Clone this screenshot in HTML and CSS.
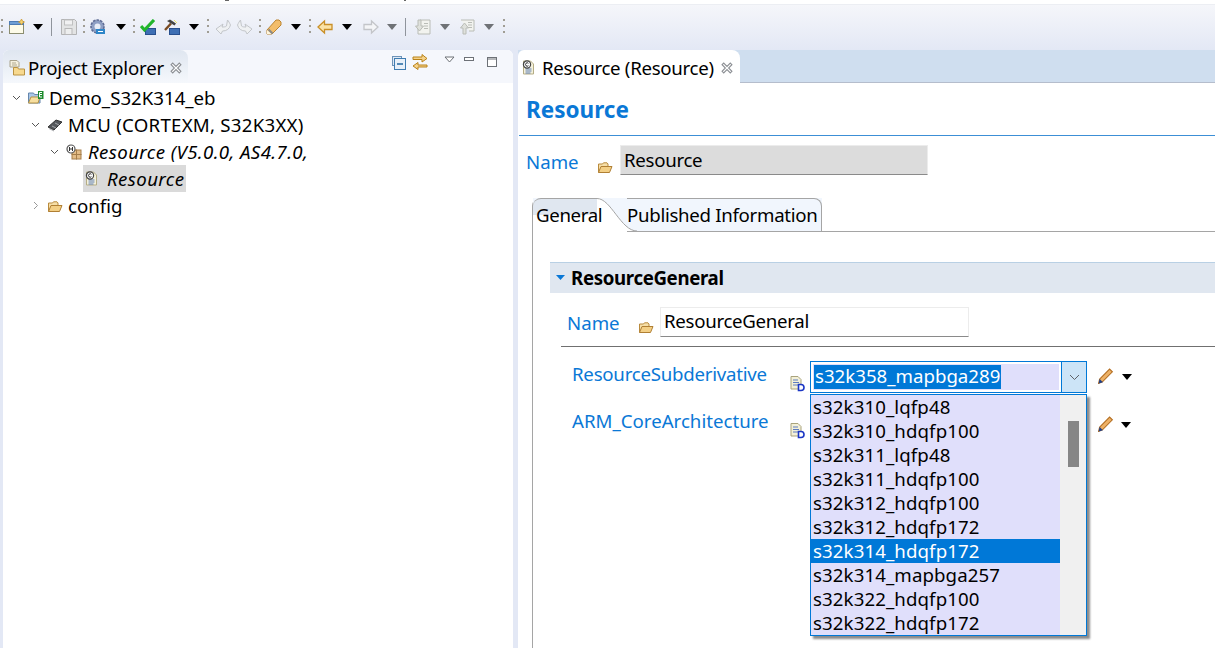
FILE: index.html
```html
<!DOCTYPE html>
<html lang="en">
<head>
<meta charset="utf-8">
<title>Resource</title>
<link rel="stylesheet" href="styles.css">
</head>
<body>
<svg class="defs" width="0" height="0" aria-hidden="true">
  <symbol id="i-folder" viewBox="0 0 16 16">
    <path d="M1.5 13.5V5h4l1-1.2h3.5L11 5v2.5" fill="#f6dfa8" stroke="#b98a3c"/>
    <path d="M1.5 13.5 4 7.5h11l-2.5 6z" fill="#f3cf85" stroke="#b07f33"/>
  </symbol>
  <symbol id="i-doc" viewBox="0 0 16 16">
    <path d="M1.5 1h7l3 3v10h-10z" fill="#f4f1dc" stroke="#b5ad85"/>
    <path d="M3.5 9h6M3.5 11h6M3.5 13h5" stroke="#5f7fb5"/>
    <circle cx="5" cy="4.5" r="3.6" fill="#fff" stroke="#444" stroke-width="1.2"/>
    <path d="M6.4 3.3A1.7 1.7 0 1 0 6.4 5.7" fill="none" stroke="#222"/>
  </symbol>
  <symbol id="i-data" viewBox="0 0 16 16">
    <path d="M1 .5h7l3 3V13H1z" fill="#f3f0d8" stroke="#a9a37c"/>
    <path d="M3 4h5M3 6.500h6M3 9h5" stroke="#5e7cc0"/>
    <path d="M8.500 8.500h2.500a3 3 0 0 1 0 6H8.500z" fill="#fff" stroke="#1b36c4" stroke-width="1.600"/>
  </symbol>
  <symbol id="i-pencil" viewBox="1 1 14.500 14.500">
    <path d="M2.500 11 11.500 2l2.500 2.500-9 9-3.500 1.500z" fill="#eeb267" stroke="#b46f22"/>
    <path d="M1.500 15l1-4 3 3z" fill="#1f3f88"/>
  </symbol>
</svg>

<div class="title-strip"><i class="desc desc-y"></i><i class="desc desc-p"></i></div>

<div class="toolbar">
  <i class="grip"></i>
  <svg class="ti m6" viewBox="0 0 16 16"><rect x=".5" y="2.500" width="14" height="12" fill="#fdfbe9" stroke="#8b8d70"/><rect x=".5" y="2.500" width="14" height="3" fill="#6f9fd5" stroke="#4e7cb3"/><path d="M12.500 0l1 2 2 1-2 1-1 2-1-2-2-1 2-1z" fill="#f8d36c" stroke="#c7932a" stroke-width=".7"/></svg>
  <i class="caret m8"></i>
  <i class="sep m8"></i>
  <svg class="ti m9 off" viewBox="0 0 16 16"><path d="M.5.500h13l2 2v13H.500z" fill="#e3e3e3" stroke="#adadad"/><rect x="3.500" y="1" width="8" height="5" fill="#f2f2f2" stroke="#bbb"/><rect x="4" y="9.500" width="7" height="6" fill="#eee" stroke="#b3b3b3"/></svg>
  <i class="grip m6"></i>
  <svg class="ti m5" viewBox="0 0 16 16"><circle cx="7.500" cy="7.500" r="6.500" fill="#8e9fc4" stroke="#5f6d96" stroke-width="1.600" stroke-dasharray="2.600 1"/><circle cx="7.500" cy="7.500" r="3" fill="#e8edf7"/><path d="M6 10h9v5H6z" fill="#2f86c8"/><path d="M8 12.500h5" stroke="#fff"/></svg>
  <i class="caret m10"></i>
  <i class="grip m7"></i>
  <svg class="ti m5" viewBox="0 0 16 16"><rect x="5.500" y="9.500" width="10" height="6" fill="#3e6fb4" stroke="#284f8e"/><path d="M1 7l3.500 4L14 1" fill="none" stroke="#22b52c" stroke-width="3.200"/></svg>
  <svg class="ti m8" viewBox="0 0 16 16"><rect x="5.500" y="9.500" width="10" height="6" fill="#3e6fb4" stroke="#284f8e"/><path d="M1 11 7 4.500" stroke="#7a4b22" stroke-width="2.400"/><path d="M3 2 6 .5l6 4-1.500 2z" fill="#444"/><path d="M10 1l3 3" stroke="#ece36a"/></svg>
  <i class="caret m9"></i>
  <i class="grip m8"></i>
  <svg class="ti m6" viewBox="0 0 16 16"><path d="M1 10l5 5 1.500-3c4 0 7-2 8-6-1-2-2-4-3-5l-1 6c-1 1-3 1-4.500 1L8 5z" fill="#eff1f3" stroke="#c3c6ca"/></svg>
  <svg class="ti m6" viewBox="0 0 16 16"><path d="M15 10l-5 5-1.500-3c-4 0-7-2-8-6 1-2 2-4 3-5l1 6c1 1 3 1 4.500 1L8 5z" fill="#eff1f3" stroke="#c3c6ca"/></svg>
  <i class="grip m6"></i>
  <svg class="ti m5" viewBox="0 0 16 16"><path d="M1 15V11L10 1h3l2 2v3L6 15z" fill="#f3bd6a" stroke="#bb8533"/><path d="M1 15v-4l5 4z" fill="#fff6dc"/><path d="M3 9.500 7.500 14 5.500 15 2 11.500z" fill="#8a8a88"/></svg>
  <i class="caret m9"></i>
  <i class="grip m8"></i>
  <svg class="ti m6" viewBox="0 0 16 16"><path d="M1 8l6.500-6v3.500H15v5H7.500V14z" fill="#fbe3a6" stroke="#c98f27" stroke-width="1.300"/></svg>
  <i class="caret m9"></i>
  <svg class="ti m11" viewBox="0 0 16 16"><path d="M15 8 8.500 2v3.500H1v5h7.500V14z" fill="#f4f5f7" stroke="#c3c5c9" stroke-width="1.300"/></svg>
  <i class="caret caret-off m8"></i>
  <i class="sep m8"></i>
  <svg class="ti m9" viewBox="0 0 16 16"><path d="M5 1h10v14H3V9" fill="#f2f3ef" stroke="#b9bcb6"/><path d="M9 4.500h4M9 7h4M9 9.500h4" stroke="#b9bcb6"/><path d="M3 1h3v6h2.500L4.500 12 .5 7H3z" fill="#dfe1dc" stroke="#b9bcb6"/></svg>
  <i class="caret caret-off m9"></i>
  <svg class="ti m10" viewBox="0 0 16 16"><path d="M1 1h13v11H9" fill="#f2f3ef" stroke="#b9bcb6"/><path d="M8 3.500h4M8 6h4M8 8.500h4" stroke="#b9bcb6"/><path d="M3 15h3V9h2.500L4.500 4 .5 9H3z" fill="#dfe1dc" stroke="#b9bcb6"/></svg>
  <i class="caret caret-off m8"></i>
  <i class="grip m9"></i>
</div>

<main class="workbench">
  <section class="explorer">
    <header class="view-bar">
      <div class="view-tab">
        <svg class="ti" viewBox="0 0 16 16"><path d="M1 .5h7l2 2V7H1z" fill="#f5f1df" stroke="#a9a28c"/><path d="M3 3h4M3 5h5" stroke="#b1a98f"/><path d="M4.500 15V7.500h4l1 1.500h6v6z" fill="#f7d98f" stroke="#ba9342"/></svg>
        <span class="view-title">Project Explorer</span>
        <svg class="close" viewBox="0 0 11 11"><path d="M1 2.500 2.500 1 5.500 4 8.500 1 10 2.500 7 5.500 10 8.500 8.500 10 5.500 7 2.500 10 1 8.500 4 5.500z" fill="#fff" stroke="#8c8f94"/></svg>
      </div>
      <div class="view-tools">
        <svg class="ti tool-a" viewBox="0 0 14 14"><rect x=".5" y=".5" width="9" height="9" fill="#dfe9f5" stroke="#6d93b8"/><rect x="2.500" y="2.500" width="11" height="11" fill="#e8f0f9" stroke="#3f7cb1"/><path d="M5 8h6" stroke="#22679f" stroke-width="1.500"/></svg>
        <svg class="ti tool-b" viewBox="0 0 16 16"><path d="M1 4h9V1.500L15 5.500l-5 3.500V6.500H1z" transform="translate(0 -1)" fill="#f5d28a" stroke="#b98218"/><path d="M15 11H6V8.500L1 12l5 3.500V13h9z" fill="#f5d28a" stroke="#b98218"/></svg>
        <svg class="vt tool-c" viewBox="0 0 11 7"><path d="M1 1h9L5.500 6z" fill="#fff" stroke="#6d7177"/></svg>
        <svg class="vt tool-d" viewBox="0 0 11 7"><rect x=".5" y="1.500" width="9" height="3" fill="#fff" stroke="#6d7177"/></svg>
        <svg class="vt-m tool-e" viewBox="0 0 10 10"><rect x=".5" y=".5" width="9" height="9" fill="#fff" stroke="#6d7177"/><path d="M.5 2h9" stroke="#6d7177"/></svg>
      </div>
    </header>
    <ul class="tree">
      <li class="row lvl0"><span class="chev"><svg viewBox="0 0 9 9"><path d="M1 3l3.500 3.500L8 3" fill="none" stroke="#555"/></svg></span>
        <svg class="ti" viewBox="0 0 16 16"><path d="M.5 13V3h5l1 1.500H12V13z" fill="#a9c6e6" stroke="#6486ad"/><path d="M.5 13 3 7h9l-2 6z" fill="#f7dfa0" stroke="#b59347"/><rect x="10" y="1" width="5.500" height="8" fill="#1d8a2c"/><path d="M14 2.500h-2.500v2H14M11.500 4.500v2.500H14" fill="none" stroke="#fff"/></svg>
        <span class="label lab0">Demo_S32K314_eb</span></li>
      <li class="row lvl1"><span class="chev"><svg viewBox="0 0 9 9"><path d="M1 3l3.500 3.500L8 3" fill="none" stroke="#555"/></svg></span>
        <svg class="ti" viewBox="0 0 16 16"><path d="M1 10 9 3l6 2-8 8z" fill="#55585c" stroke="#333"/><path d="M2 11.500 7 14M5 9l4 2M8 6l4 2" stroke="#a7a9ac"/></svg>
        <span class="label lab-mcu">MCU (CORTEXM, S32K3XX)</span></li>
      <li class="row lvl2"><span class="chev"><svg viewBox="0 0 9 9"><path d="M1 3l3.500 3.500L8 3" fill="none" stroke="#555"/></svg></span>
        <svg class="ti" viewBox="0 0 16 16"><rect x="6" y="6" width="4.500" height="4.500" fill="#e3bd88" stroke="#a67e4a"/><rect x="10.500" y="6" width="4.500" height="4.500" fill="#e3bd88" stroke="#a67e4a"/><rect x="6" y="10.500" width="4.500" height="4.500" fill="#e3bd88" stroke="#a67e4a"/><rect x="10.500" y="10.500" width="4.500" height="4.500" fill="#e3bd88" stroke="#a67e4a"/><circle cx="5" cy="5" r="4" fill="#fff" stroke="#555" stroke-width="1.200"/><path d="M3.500 3v4M6.500 3v4M3.500 5h3" stroke="#333"/></svg>
        <span class="label lab-i">Resource (V5.0.0, AS4.7.0,</span></li>
      <li class="row lvl3"><span class="sel"><svg class="ti"><use href="#i-doc"/></svg><span class="label lab-i">Resource</span></span></li>
      <li class="row lvl1"><span class="chev"><svg viewBox="0 0 9 9"><path d="M3 1l3.500 3.500L3 8" fill="none" stroke="#999"/></svg></span>
        <svg class="ti"><use href="#i-folder"/></svg>
        <span class="label">config</span></li>
    </ul>
  </section>

  <section class="editor">
    <header class="ed-bar">
      <div class="ed-tab">
        <svg class="ti" viewBox="0 0 16 16"><use href="#i-doc"/></svg>
        <span class="ed-title">Resource (Resource)</span>
        <svg class="close" viewBox="0 0 11 11"><path d="M1 2.500 2.500 1 5.500 4 8.500 1 10 2.500 7 5.500 10 8.500 8.500 10 5.500 7 2.500 10 1 8.500 4 5.500z" fill="#fff" stroke="#8c8f94"/></svg>
      </div>
    </header>
    <div class="ed-body">
      <h1 class="form-title">Resource</h1>
      <div class="name-row">
        <span class="link">Name</span>
        <svg class="ti folder"><use href="#i-folder"/></svg>
        <span class="ro-field">Resource</span>
      </div>
      <div class="tabs">
        <div class="tab-strip">
          <span class="tab-on"><span class="tab-on-text">General</span></span>
          <svg class="tab-curve" viewBox="0 0 40 34" preserveAspectRatio="none"><path d="M0 0c14 0 24 33 40 33v1H0z" fill="#fff"/><path d="M0 .5C14 .5 24 33 40 33" fill="none" stroke="#a5a5a5"/></svg>
          <span class="tab-off">Published Information</span>
        </div>
        <div class="tab-body">
          <div class="sec-head"><svg class="tri" viewBox="0 0 9 5"><path d="M0 0h9L4.500 5z" fill="#0a78d6"/></svg><span class="sec-title">ResourceGeneral</span></div>
          <div class="sec-name">
            <span class="link">Name</span>
            <svg class="ti folder2"><use href="#i-folder"/></svg>
            <span class="rw-field">ResourceGeneral</span>
          </div>
          <div class="sec-rule"></div>
          <div class="param p1">
            <span class="link plabel">ResourceSubderivative</span>
            <svg class="ti pico"><use href="#i-data"/></svg>
            <div class="combo">
              <span class="combo-text"><span class="combo-sel">s32k358_mapbga289</span></span>
              <span class="combo-btn"><svg viewBox="0 0 11 7"><path d="M1 1l4.500 4.500L10 1" fill="none" stroke="#5f6368"/></svg></span>
            </div>
            <svg class="ti pen"><use href="#i-pencil"/></svg>
            <i class="caret pcaret"></i>
          </div>
          <div class="param p2">
            <span class="link plabel plabel2">ARM_CoreArchitecture</span>
            <svg class="ti pico"><use href="#i-data"/></svg>
            <svg class="ti pen pen2"><use href="#i-pencil"/></svg>
            <i class="caret pcaret"></i>
          </div>
        </div>
      </div>
    </div>
  </section>
</main>

<div class="popup">
  <ul class="options">
    <li>s32k310_lqfp48</li>
    <li>s32k310_hdqfp100</li>
    <li>s32k311_lqfp48</li>
    <li>s32k311_hdqfp100</li>
    <li>s32k312_hdqfp100</li>
    <li>s32k312_hdqfp172</li>
    <li class="picked">s32k314_hdqfp172</li>
    <li>s32k314_mapbga257</li>
    <li>s32k322_hdqfp100</li>
    <li>s32k322_hdqfp172</li>
  </ul>
  <div class="scroll"><i class="thumb"></i></div>
</div>
</body>
</html>
```
FILE: styles.css
```css
* { box-sizing: border-box; }
html, body { margin: 0; padding: 0; height: 100%; overflow: hidden; }
body {
  width: 1215px;
  height: 648px;
  display: flex;
  flex-direction: column;
  background: #e3e8f5;
  color: #000;
  font-family: "Noto Sans", "Open Sans", sans-serif;
  font-size: 18.67px;
  position: relative;
}
.defs { position: absolute; }
i { display: block; flex: none; }
ul { list-style: none; margin: 0; padding: 0; }

.title-strip { height: 5px; background: #fff; border-bottom: 1px solid #eceef3; position: relative; flex: none; }
.desc { position: absolute; top: 0; height: 1px; width: 4px; background: #666; }
.desc-y { left: 225px; }
.desc-p { left: 404px; width: 2px; }

.toolbar {
  height: 45px;
  flex: none;
  display: flex;
  align-items: center;
  padding: 0 0 2px 1px;
  background: linear-gradient(#f5f6fa, #e3e8f5);
}
.ti { width: 16px; height: 16px; flex: none; display: block; }
.off { opacity: .9; }
.grip { width: 2px; height: 16px; background: repeating-linear-gradient(#a09d94 0 2px, transparent 2px 6px); }
.sep { width: 1px; height: 18px; background: #8f949c; }
.caret { width: 0; height: 0; border-left: 5.500px solid transparent; border-right: 5.500px solid transparent; border-top: 6px solid #000; }
.caret-off { border-top-color: #6f7276; }
.m5 { margin-left: 5px; } .m6 { margin-left: 6px; } .m7 { margin-left: 7px; } .m8 { margin-left: 8px; }
.m9 { margin-left: 9px; } .m10 { margin-left: 10px; } .m11 { margin-left: 11px; }

.workbench { flex: 1; display: flex; gap: 5px; padding-left: 3px; min-height: 0; }

.explorer { width: 510px; background: #fff; border-radius: 6px 6px 0 0; flex: none; }
.view-bar { height: 33px; display: flex; background: #f5f7fc; border-radius: 6px 6px 0 0; }
.view-tab {
  width: 185px; display: flex; align-items: center; padding: 2px 0 0 6px;
  background: linear-gradient(#dfe6f0, #f5f8fc);
  border-radius: 6px 8px 0 0;
}
.view-title { margin-left: 3px; letter-spacing: -.2px; white-space: nowrap; }
.close { width: 12px; height: 12px; margin-left: 6px; flex: none; }
.view-tools { flex: 1; position: relative; }
.tool-a { position: absolute; left: 204px; top: 6px; width: 14px; height: 14px; }
.tool-b { position: absolute; left: 224px; top: 4px; }
.vt { position: absolute; width: 11px; height: 7px; top: 6px; }
.tool-c { left: 256px; }
.tool-d { left: 276px; }
.vt-m { position: absolute; width: 10px; height: 10px; top: 7px; left: 299px; }

.tree { padding-top: 1px; }
.row { height: 27px; display: flex; align-items: center; white-space: nowrap; }
.chev { width: 9px; height: 9px; display: block; margin-right: 7px; flex: none; }
.chev svg { display: block; width: 9px; height: 9px; }
.lvl0 { padding-left: 9px; }
.lvl1 { padding-left: 28px; }
.lvl2 { padding-left: 47px; }
.lvl3 { padding-left: 80px; }
.label { margin-left: 5px; }
.lab-mcu { letter-spacing: .25px; }
.lab-i { font-style: italic; margin-left: 6px; letter-spacing: .4px; }
.sel { display: flex; align-items: center; height: 27px; width: 103px; background: #dadada; padding-left: 2px; }

.editor { flex: 1; min-width: 0; background: #fff; }
.ed-bar { height: 33px; background: #cfdeef; border-bottom: 1px solid #b5bdcc; }
.ed-tab {
  width: 222px; height: 33px; background: #fff; border-radius: 6px 8px 0 0;
  display: flex; align-items: center; padding: 2px 0 0 4px;
}
.ed-title { margin-left: 4px; letter-spacing: -.3px; white-space: nowrap; }
.ed-tab .close { margin-left: 7px; }
.ed-body { padding-left: 1px; }
.form-title { margin: 0; padding-left: 7px; height: 53px; line-height: 53px; font-size: 22.500px; font-weight: 700; color: #0a78d6; border-bottom: 1px solid #3c8fd6; }
.link { color: #0a78d6; white-space: nowrap; }
.name-row { display: flex; align-items: flex-start; height: 62px; padding: 9px 0 0 7px; }
.name-row .link { line-height: 33px; width: 71px; }
.folder { margin-top: 14px; }
.ro-field { margin-left: 7px; width: 308px; height: 30px; background: #dcdcdc; border: 1px solid #ececec; border-bottom: 1px solid #8a8a8a; line-height: 28px; padding-left: 3px; letter-spacing: -.3px; }

.tabs { margin-left: 13px; border-left: 1px solid #a5a5a5; border-radius: 8px 0 0 0; height: 450px; }
.tab-strip { height: 34px; display: flex; align-items: stretch; background: linear-gradient(#f1f6fd, #f1f6fd) no-repeat 0 0 / 289px 100%; }
.tab-on { width: 64px; padding-left: 3px; background: linear-gradient(#e0e7f0 0 16px, #fff 16px); border-top: 1px solid #a5a5a5; border-radius: 8px 0 0 0; line-height: 31px; white-space: nowrap; }
.tab-on-text { position: relative; z-index: 1; letter-spacing: -.35px; }
.tab-curve { width: 40px; height: 34px; flex: none; }
.tab-off {
  margin-left: -10px; width: 195px; border-top: 1px solid #a5a5a5; border-right: 1px solid #a5a5a5;
  border-bottom: 1px solid #a5a5a5; border-radius: 0 8px 0 0; line-height: 31px; white-space: nowrap; letter-spacing: -.3px;
}
.tab-strip::after { content: ""; flex: 1; border-bottom: 1px solid #a5a5a5; }
.tab-body { padding: 30px 0 0 17px; }
.sec-head { height: 31px; background: #e0e7f0; border-top: 1px solid #b9d0e4; display: flex; align-items: center; padding: 0 0 2px 6px; }
.tri { width: 9px; height: 5px; flex: none; }
.sec-title { margin-left: 6px; font-weight: 700; letter-spacing: -.35px; }
.sec-name { display: flex; height: 43px; padding: 14px 0 0 17px; }
.sec-name .link { width: 71px; line-height: 32px; }
.folder2 { margin-top: 12px; }
.rw-field { margin-left: 6px; width: 309px; height: 30px; background: #fff; border: 1px solid #ececec; border-bottom: 1px solid #8a8a8a; line-height: 26px; padding-left: 3px; letter-spacing: -.3px; }
.sec-rule { margin: 10px 0 0 11px; border-top: 1px solid #707070; }

.param { display: flex; }
.p1 { height: 61px; padding: 14px 0 0 22px; }
.p2 { height: 40px; padding: 0 0 0 22px; }
.plabel { width: 218px; line-height: 25px; letter-spacing: -.25px; }
.plabel2 { letter-spacing: 0; }
.pico { margin-top: 15px; }
.combo { margin-left: 4px; width: 277px; height: 32px; border: 1px solid #0078d7; background: #fff; display: flex; }
.combo-text { flex: 1; margin: 2px; background: #e0dffb; padding: 1px 0 0 1px; }
.combo-sel { display: inline-block; background: #0078d7; color: #fff; height: 24px; line-height: 22px; padding: 0 1px; vertical-align: top; }
.combo-btn { width: 25px; background: #cce4f7; border-left: 1px solid #0078d7; display: flex; align-items: center; justify-content: center; }
.combo-btn svg { width: 11px; height: 7px; display: block; }
.pen { margin: 7px 0 0 11px; }
.pen2 { margin-left: 292px; margin-top: 8px; }
.pcaret { margin: 13px 0 0 8px; }
.p2 .pcaret { margin: 14px 0 0 7px; }

.popup {
  position: absolute; left: 810px; top: 394px; width: 277px; height: 242px;
  border: 1px solid #0078d7; background: #f0f0f0; display: flex;
  box-shadow: 3px 3px 2px #8c8c8c;
}
.options { width: 249px; background: #e0dffb; flex: none; }
.options li { height: 24px; line-height: 24px; padding-left: 2px; white-space: nowrap; letter-spacing: .1px; }
.picked { background: #0078d7; color: #fff; }
.scroll { flex: 1; position: relative; }
.thumb { position: absolute; left: 8px; top: 26px; width: 11px; height: 46px; background: #868686; }
```
